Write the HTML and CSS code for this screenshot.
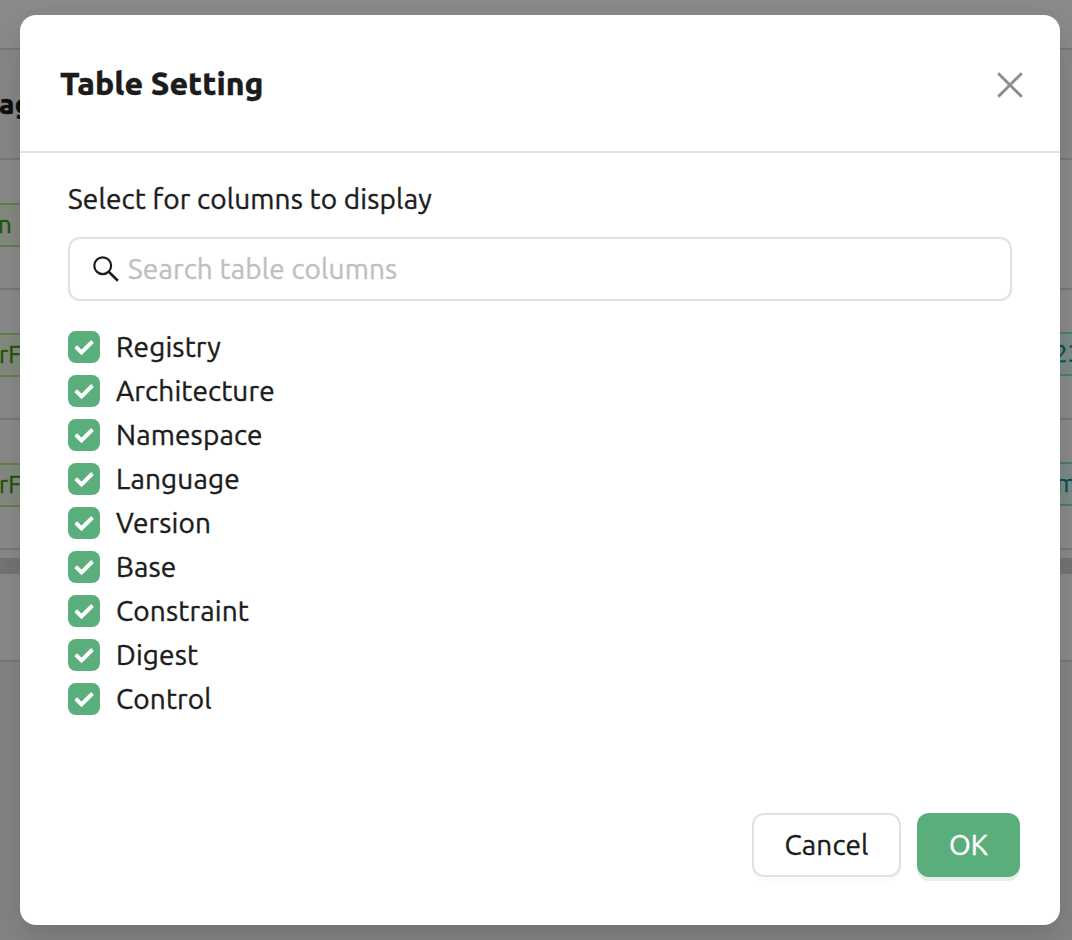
FILE: index.html
```html
<!DOCTYPE html>
<html lang="en">
<head>
<meta charset="utf-8">
<title>Table Setting</title>
<link rel="stylesheet" href="styles.css">
</head>
<body>
<svg class="defs" width="0" height="0" aria-hidden="true">
  <symbol id="check" viewBox="0 0 32 32"><path d="M7.7 15.7 13.5 21.5 24.5 10.5" fill="none" stroke="#fff" stroke-width="4"/></symbol>
</svg>
<main class="page">
  <div class="toolbar"></div>
  <div class="row head"><span class="heading">ag</span></div>
  <div class="row"><span class="tag green first">n</span></div>
  <div class="row"><span class="tag green">rF</span><span class="tag cyan digits">23</span></div>
  <div class="row"><span class="tag green">rF</span><span class="tag cyan">m</span></div>
  <div class="scroll"><div class="thumb"></div></div>
</main>
<div class="backdrop">
  <section class="modal" role="dialog" aria-labelledby="title">
    <header class="modal-head">
      <h1 class="title" id="title">Table Setting</h1>
      <svg class="close" viewBox="0 0 28 28"><path d="M2.2 2.2 25.8 25.8M25.8 2.2 2.2 25.8" fill="none" stroke="#8c8c8c" stroke-width="2.9"/></svg>
    </header>
    <div class="body">
      <div class="label">Select for columns to display</div>
      <div class="search">
        <svg class="glass" viewBox="0 0 28 28"><circle cx="10.7" cy="10.7" r="8.4" fill="none" stroke="#1c1c1c" stroke-width="2.2"/><path d="M16.7 16.7 25.9 25.7" fill="none" stroke="#1c1c1c" stroke-width="2.6"/></svg>
        <span class="placeholder">Search table columns</span>
      </div>
      <div class="options">
        <div class="option"><svg class="box"><use href="#check"/></svg><span>Registry</span></div>
        <div class="option"><svg class="box"><use href="#check"/></svg><span>Architecture</span></div>
        <div class="option"><svg class="box"><use href="#check"/></svg><span>Namespace</span></div>
        <div class="option"><svg class="box"><use href="#check"/></svg><span>Language</span></div>
        <div class="option"><svg class="box"><use href="#check"/></svg><span>Version</span></div>
        <div class="option"><svg class="box"><use href="#check"/></svg><span>Base</span></div>
        <div class="option"><svg class="box"><use href="#check"/></svg><span>Constraint</span></div>
        <div class="option"><svg class="box"><use href="#check"/></svg><span>Digest</span></div>
        <div class="option"><svg class="box"><use href="#check"/></svg><span>Control</span></div>
      </div>
    </div>
    <footer class="foot">
      <button class="btn cancel">Cancel</button>
      <button class="btn ok">OK</button>
    </footer>
  </section>
</div>
</body>
</html>
```
FILE: styles.css
```css
* { box-sizing: border-box; }
body { margin: 0; width: 1072px; height: 940px; overflow: hidden; background: #f5f5f5; color: #1c1c1c; font: 400 28px/42px Ubuntu, "Noto Sans", sans-serif; letter-spacing: .15px; -webkit-text-stroke: .4px; }
.defs { display: block; height: 0; }
.page { height: 662px; background: #fff; border-bottom: 2px solid #ddd; }
.toolbar { height: 50px; border-bottom: 2px solid #ddd; }
.row { height: 130px; display: flex; align-items: center; justify-content: space-between; border-bottom: 2px solid #ddd; }
.head { height: 110px; background: #fafafa; }
.heading { font-weight: 800; font-size: 28px; margin-left: -1px; }
.tag { height: 44px; line-height: 39px; font-size: 24px; border: 2px solid; border-left: 0; }
.green { width: 70px; margin-top: 2px; color: #389e0d; background: #f6ffed; border-color: #b7eb8f; text-indent: -1px; }
.first { text-indent: -2px; }
.cyan { width: 54px; margin-right: -36px; color: #08979c; background: #e6fffb; border-color: #87e8de; text-indent: 2px; }
.digits { text-indent: 0; }
.scroll { height: 24px; padding-top: 8px; }
.thumb { height: 16px; background: #d8d8d8; }
.backdrop { position: absolute; inset: 0; padding: 15px 12px 15px 20px; background: rgba(0,0,0,.45); }
.modal { height: 910px; display: flex; flex-direction: column; background: #fff; border-radius: 16px; box-shadow: 0 12px 32px rgba(0,0,0,.08), 0 6px 12px -8px rgba(0,0,0,.12), 0 18px 56px 16px rgba(0,0,0,.05); }
.modal-head { height: 138px; padding: 0 36px 0 40px; border-bottom: 2px solid #e0e0e6; display: flex; align-items: center; justify-content: space-between; }
.title { margin: 0; font-size: 32px; font-weight: 800; letter-spacing: 0; -webkit-text-stroke: .3px; }
.close { width: 28px; height: 28px; margin-top: 3px; }
.body { padding: 25px 48px 0; flex: 1; }
.label { height: 44px; }
.search { height: 64px; margin-top: 15px; padding: 0 22px; border: 2px solid #e0e0e6; border-radius: 12px; display: flex; align-items: center; gap: 8px; }
.glass { width: 28px; height: 28px; }
.placeholder { color: #bfbfbf; }
.options { padding-top: 24px; }
.option { height: 44px; display: flex; align-items: center; gap: 16px; }
.box { width: 32px; height: 32px; border-radius: 8px; background: #5aae7c; }
.foot { padding: 0 40px 48px; display: flex; justify-content: flex-end; gap: 16px; }
.btn { height: 64px; padding: 0; border-radius: 12px; font: inherit; letter-spacing: inherit; color: inherit; }
.cancel { width: 149px; background: #fff; border: 2px solid #e0e0e6; box-shadow: 0 4px 0 rgba(0,0,0,.02); }
.ok { width: 103px; border: 0; background: #5aae7c; color: #fff; box-shadow: 0 4px 0 #e6f0e8; }
```
